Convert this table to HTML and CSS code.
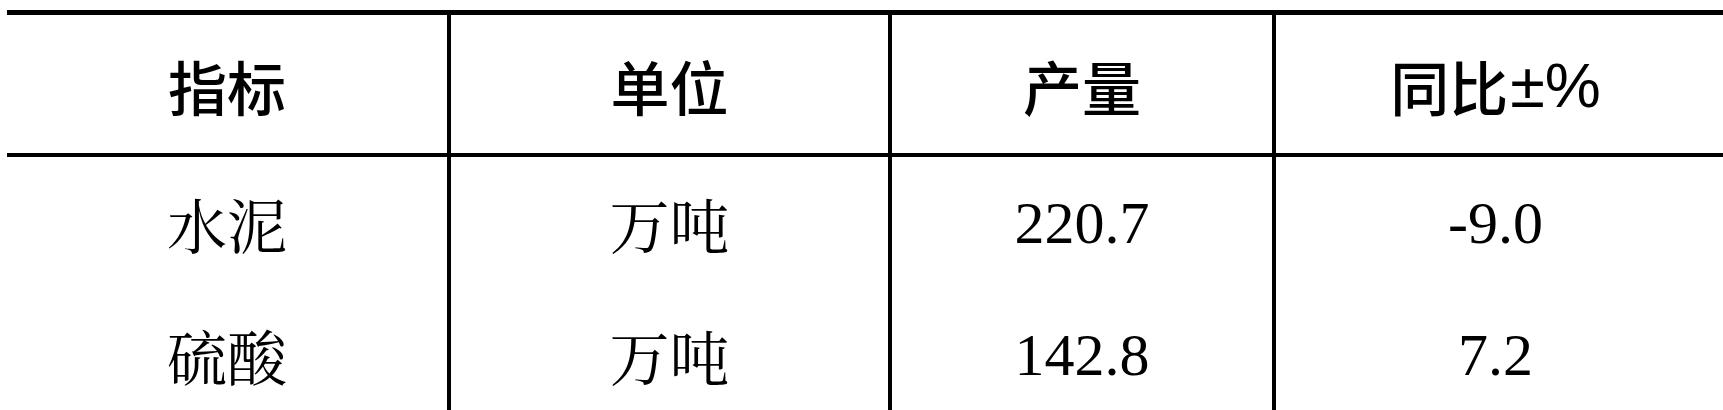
FILE: index.html
```html
<!DOCTYPE html>
<html lang="zh-CN">
<head>
<meta charset="utf-8">
<title>产量表</title>
<link rel="stylesheet" href="styles.css">
</head>
<body>
<div class="table" role="table">
  <div class="row head" role="row">
    <div class="cell" role="columnheader">指标</div>
    <div class="cell" role="columnheader">单位</div>
    <div class="cell" role="columnheader">产量</div>
    <div class="cell" role="columnheader">同比<span class="sym">±%</span></div>
  </div>
  <div class="row body" role="row">
    <div class="cell" role="cell">水泥</div>
    <div class="cell" role="cell">万吨</div>
    <div class="cell" role="cell">220.7</div>
    <div class="cell" role="cell">-9.0</div>
  </div>
  <div class="row body" role="row">
    <div class="cell" role="cell">硫酸</div>
    <div class="cell" role="cell">万吨</div>
    <div class="cell" role="cell">142.8</div>
    <div class="cell" role="cell">7.2</div>
  </div>
</div>
</body>
</html>
```
FILE: styles.css
```css
html, body {
  margin: 0;
  padding: 0;
  background: #ffffff;
  overflow: hidden;
}

.table {
  margin: 10px 0 0 7px;
  color: #000000;
}

.row {
  display: grid;
  grid-template-columns: 440px 441px 384px 1fr;
}

.cell {
  display: flex;
  align-items: center;
  justify-content: center;
  box-sizing: border-box;
  white-space: nowrap;
}

.cell + .cell {
  border-left: 4px solid #000000;
}

.head {
  border-top: 5px solid #000000;
  border-bottom: 4px solid #000000;
}

.head .cell {
  height: 138px;
  font-family: "Noto Sans CJK SC", sans-serif;
  font-weight: 500;
  font-size: 59px;
  padding-top: 2px;
}

.head .cell:last-child {
  padding-right: 8px;
}

.head .sym {
  font-family: "Liberation Sans", sans-serif;
  font-weight: 400;
  font-size: 63px;
  padding-left: 2px;
}

.body .cell {
  height: 132px;
  font-family: "Liberation Serif", "Noto Serif CJK SC", "Noto Sans CJK SC", serif;
  font-weight: 400;
  font-size: 60px;
}

.body .cell:last-child {
  padding-right: 8px;
}
```
